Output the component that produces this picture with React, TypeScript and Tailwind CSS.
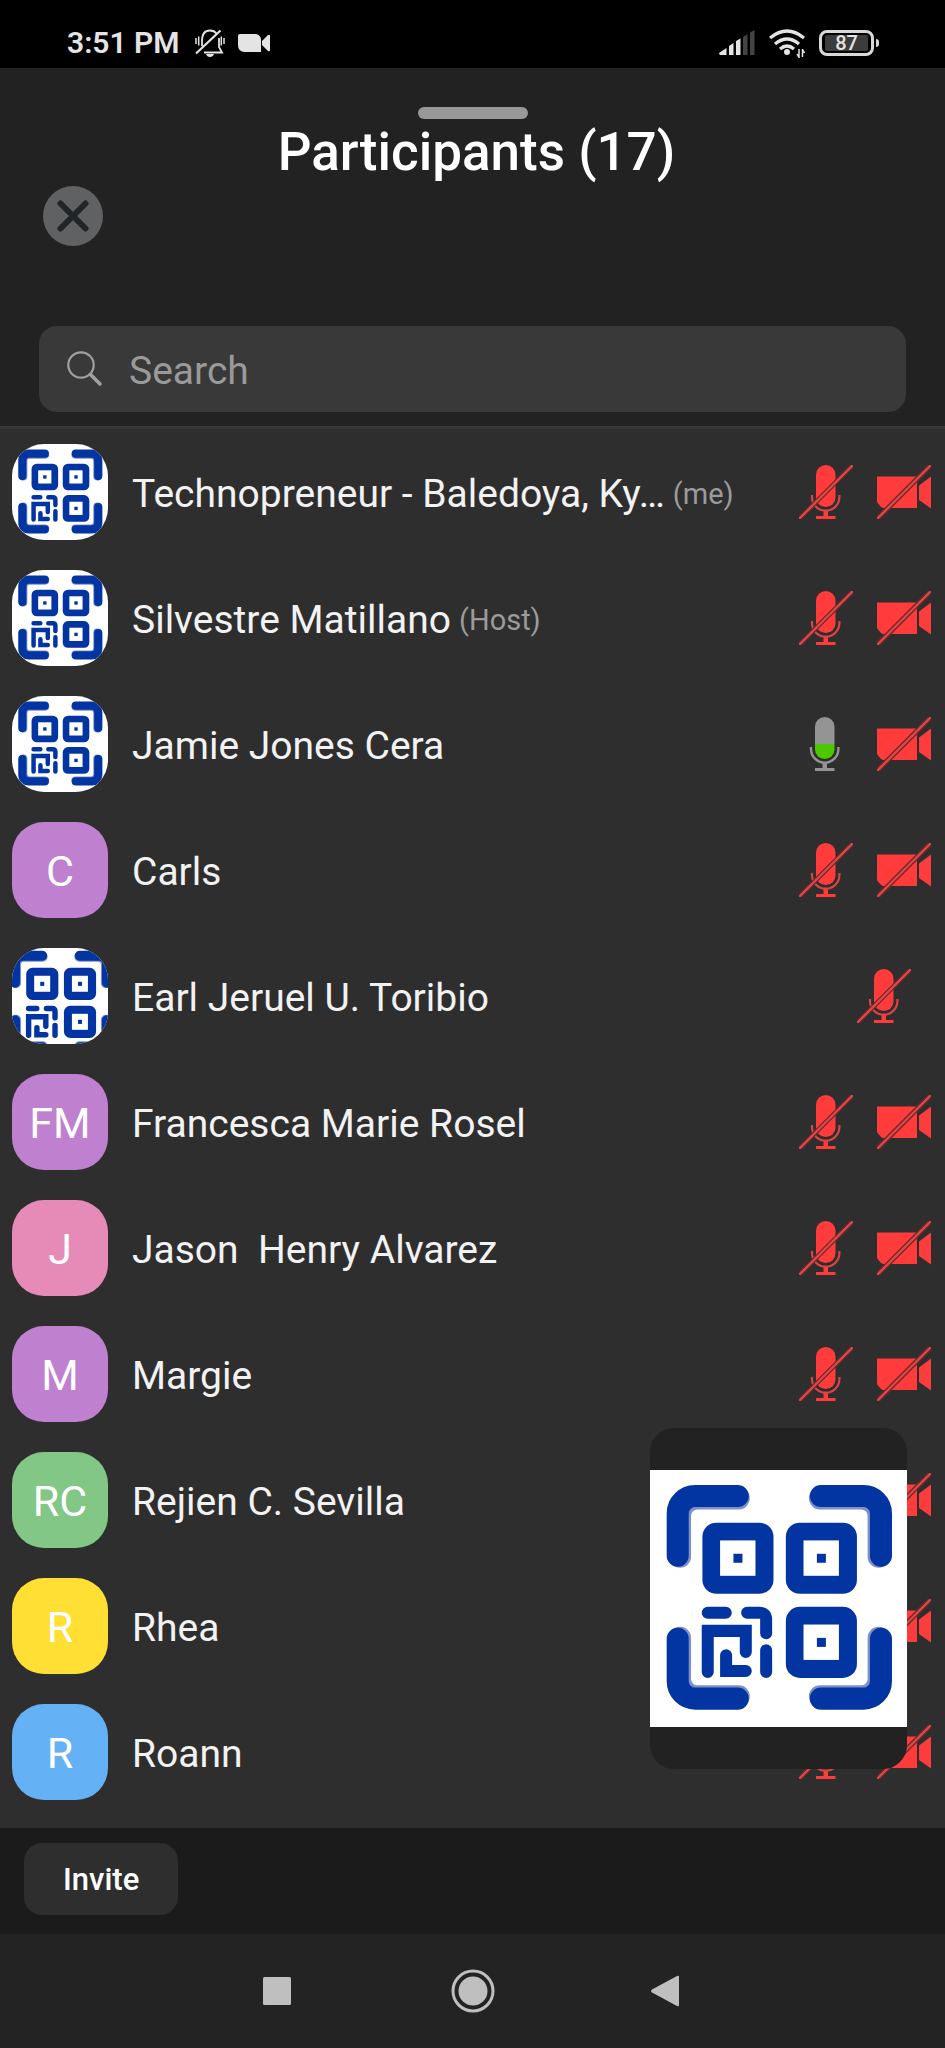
type Camera = "off" | "none";
type Mic = "off" | "live";

interface Participant {
  name: string;
  tag?: string;
  initials?: string;
  color?: string;
  viewBox?: string;
  mic: Mic;
  camera: Camera;
}

const FULL_LOGO = "0 0 770 770";
const CROPPED_LOGO = "63 27 636 636";

const participants: Participant[] = [
  { name: "Technopreneur - Baledoya, Ky…", tag: "(me)", viewBox: FULL_LOGO, mic: "off", camera: "off" },
  { name: "Silvestre Matillano", tag: "(Host)", viewBox: FULL_LOGO, mic: "off", camera: "off" },
  { name: "Jamie Jones Cera", viewBox: FULL_LOGO, mic: "live", camera: "off" },
  { name: "Carls", initials: "C", color: "bg-[#c080d0]", mic: "off", camera: "off" },
  { name: "Earl Jeruel U. Toribio", viewBox: CROPPED_LOGO, mic: "off", camera: "none" },
  { name: "Francesca Marie Rosel", initials: "FM", color: "bg-[#c080d0]", mic: "off", camera: "off" },
  { name: "Jason  Henry Alvarez", initials: "J", color: "bg-[#e68ab8]", mic: "off", camera: "off" },
  { name: "Margie", initials: "M", color: "bg-[#c080d0]", mic: "off", camera: "off" },
  { name: "Rejien C. Sevilla", initials: "RC", color: "bg-[#82c785]", mic: "off", camera: "off" },
  { name: "Rhea", initials: "R", color: "bg-[#ffdf33]", mic: "off", camera: "off" },
  { name: "Roann", initials: "R", color: "bg-[#64b2f5]", mic: "off", camera: "off" },
];

const corners = [
  undefined,
  "translate(775 0) scale(-1 1)",
  "translate(0 763) scale(1 -1)",
  "translate(775 763) scale(-1 -1)",
];

const markers = [
  [157, 158],
  [407, 158],
  [407, 410],
];

function QrLogo({ viewBox, className }: { viewBox: string; className: string }) {
  return (
    <svg viewBox={viewBox} className={className} aria-hidden="true">
      <rect width="770" height="770" fill="#fff" />
      {corners.map((transform, i) => (
        <g key={i} transform={transform} fill="none" strokeLinecap="round" strokeWidth="66">
          <path d="M90 260V137A52 52 0 0 1 142 85H266" stroke="#7d90c9" />
          <path d="M83 257V130A52 52 0 0 1 135 78H263" stroke="#0335a2" />
        </g>
      ))}
      {markers.map(([x, y]) => (
        <g key={`${x}-${y}`} fill="#0335a2">
          <rect x={x} y={y} width="213" height="213" rx="42" />
          <rect x={x + 53} y={y + 53} width="106" height="106" fill="#fff" />
          <rect x={x + 93} y={y + 93} width="27" height="27" />
        </g>
      ))}
      <g fill="none" stroke="#0335a2" strokeWidth="36" strokeLinecap="round">
        <path d="M173 428H227M291 428H328Q348 428 348 448V489M348 540V605" />
        <path d="M173 605V482H287V545M228 555V602H287" />
      </g>
    </svg>
  );
}

function MicOff() {
  return (
    <svg viewBox="0 0 54 54" className="size-[54px]" role="img" aria-label="Microphone off">
      <g fill="#ff3b3b">
        <rect x="17" y="0" width="19.5" height="42" rx="9.75" />
        <path d="M24.5 45H29V51H36.5V54H17V51H24.5Z" />
      </g>
      <path d="M13 30V32A13.7 13.7 0 0 0 40.4 32V30" fill="none" stroke="#d94545" strokeWidth="2.2" />
      <path d="M1 53L53 1" stroke="#6d2727" strokeWidth="4.6" />
      <path d="M1 53L53 1" stroke="#dd4848" strokeWidth="2.4" strokeLinecap="round" />
    </svg>
  );
}

function MicLive() {
  return (
    <svg viewBox="0 0 54 54" className="size-[54px]" role="img" aria-label="Microphone on">
      <path d="M16 27V9.75A9.75 9.75 0 0 1 35.5 9.75V27Z" fill="#949494" />
      <path d="M16 27V32.25A9.75 9.75 0 0 0 35.5 32.25V27Z" fill="#4cc800" />
      <path d="M23.5 45H28V51H35.5V54H16V51H23.5Z" fill="#949494" />
      <path d="M12 30V32A13.7 13.7 0 0 0 39.4 32V30" fill="none" stroke="#949494" strokeWidth="2.4" />
    </svg>
  );
}

function CameraOff() {
  return (
    <svg viewBox="0 0 54 54" className="size-[54px]" role="img" aria-label="Camera off">
      <path d="M0 11.5H40V43H7Q5 43 4 42L1 38.5Q0 37.5 0 36Z" fill="#ff3b3b" />
      <path d="M42 20.5L54 11.5V43.5L42 35Z" fill="#fb3d3d" />
      <path d="M1 53L53 1" stroke="#6d2727" strokeWidth="5" />
      <path d="M1 53L53 1" stroke="#dd4848" strokeWidth="2.4" strokeLinecap="round" />
    </svg>
  );
}

function StatusBar() {
  return (
    <div className="flex h-[68px] items-center justify-between bg-black pr-[66px] pl-[67px] text-[#e4e4e4]">
      <div className="flex items-center pt-[18px]">
        <span className="text-[30px] leading-8 font-semibold">3:51 PM</span>
        <svg viewBox="0 0 30 28" className="ml-[15px] h-7 w-[30px]" fill="none" stroke="currentColor" strokeWidth="1.8" aria-hidden="true">
          <path d="M7 17V12C7 5 10 1.5 15 1.5C18 1.5 20 2.5 21.5 4.5M24 9V18L27 23.5H9" />
          <path d="M1 24.5L25.5 1.5" strokeWidth="2.2" />
          <path d="M1 9V15M3.7 7.5V16.5M26.3 7.5V16.5M29 9V15" strokeWidth="1.5" />
          <path d="M11 25H19Q18 28 15 28T11 25Z" fill="currentColor" stroke="none" />
        </svg>
        <svg viewBox="0 0 32 18" className="ml-[13px] h-[18px] w-8" fill="currentColor" aria-hidden="true">
          <path d="M2 0H18Q23 1 23 6V18H6Q0 17 0 11V2Q0 0 2 0ZM24 7L30 1Q32 0 32 2V16Q32 18 30 17L24 11Z" />
        </svg>
      </div>
      <div className="flex items-center pt-[18px]">
        <svg viewBox="0 0 36 26" className="h-[26px] w-9" fill="currentColor" aria-hidden="true">
          <path d="M0 23L7.5 18V25H1.5Q0 25 0 23ZM10 16L14.5 13V25H10ZM17 11L21.5 8.5V25H17Z" />
          <path d="M24 7L28.5 4V25H24ZM31 2.5L35.5 0V25H31Z" fill="#444" />
        </svg>
        <svg viewBox="0 0 36 29" className="ml-[14px] h-[29px] w-9" fill="none" stroke="currentColor" strokeWidth="3.2" aria-hidden="true">
          <path d="M1 9Q18-5 35 9M6 15Q18 5 30 15M11 20Q18 14 25 20" />
          <circle cx="18" cy="23" r="3" fill="currentColor" stroke="none" />
          <path d="M30 20V29M33.5 20V28M28 25L30 28.5M33.5 20.5L35.5 24" strokeWidth="1.5" />
        </svg>
        <div className="ml-[14px] flex h-[26px] w-[55px] items-center rounded-lg border-3 border-[#d8d8d8] px-[3px]">
          <span className="flex h-4 w-full items-center justify-center rounded-xs bg-[#3c3c3c] text-xl leading-5 font-medium">87</span>
        </div>
        <span className="ml-0.5 h-2 w-[3px] rounded-r bg-[#d8d8d8]" />
      </div>
    </div>
  );
}

function ParticipantRow({ person }: { person: Participant }) {
  return (
    <li className="flex h-[126px] items-center pr-[14px] pl-3">
      {person.viewBox ? (
        <QrLogo viewBox={person.viewBox} className="size-24 shrink-0 rounded-[32px]" />
      ) : (
        <span className={`flex size-24 shrink-0 items-center justify-center rounded-[32px] pt-0.5 text-[43px] leading-none ${person.color}`}>
          {person.initials}
        </span>
      )}
      <span className="flex items-center gap-2 pt-1 pl-6">
        <span className="text-[39px] leading-[46px] whitespace-pre text-[#f2f2f2]">{person.name}</span>
        {person.tag && <span className="text-[29px] leading-9 text-[#9b9b9b]">{person.tag}</span>}
      </span>
      <span className={`ml-auto flex shrink-0 gap-6 ${person.camera === "none" ? "pr-5" : ""}`}>
        {person.mic === "off" ? <MicOff /> : <MicLive />}
        {person.camera === "off" && <CameraOff />}
      </span>
    </li>
  );
}

export default function App() {
  return (
    <div className="flex min-h-screen flex-col bg-[#222] font-[Roboto,sans-serif] text-white">
      <StatusBar />
      <header className="flex flex-col px-[39px] pt-[39px] pb-[14px]">
        <span className="h-3 w-[110px] self-center rounded-full bg-[#989898]" />
        <h1 className="pl-2 text-center text-[53px] leading-[66px] font-medium">Participants (17)</h1>
        <button type="button" aria-label="Close" className="mt-px ml-1 flex size-[60px] items-center justify-center rounded-full bg-[#5f6163]">
          <svg viewBox="0 0 32 32" className="size-8" fill="none" stroke="#212528" strokeWidth="6" strokeLinecap="round" aria-hidden="true">
            <path d="M3.5 3.5L28.5 28.5M28.5 3.5L3.5 28.5" />
          </svg>
        </button>
        <label className="mt-20 flex h-[86px] items-center rounded-[18px] bg-[#393939] pl-7">
          <svg viewBox="0 0 36 36" className="size-9 shrink-0" fill="none" stroke="#a0a0a0" aria-hidden="true">
            <circle cx="14" cy="14" r="12.7" strokeWidth="2.2" />
            <path d="M23.5 23.5L33 33" strokeWidth="3.6" strokeLinecap="round" />
          </svg>
          <input
            type="text"
            aria-label="Search"
            placeholder="Search"
            className="min-w-0 flex-1 bg-transparent pt-1 pl-[26px] text-[39px] leading-[46px] outline-none placeholder:text-[#9a9a9a]"
          />
        </label>
      </header>
      <main className="relative flex-1 border-t-3 border-[#373737] bg-[#2e2e2e] pb-3">
        <ul>
          {participants.map((person) => (
            <ParticipantRow key={person.name} person={person} />
          ))}
        </ul>
        <div className="absolute right-[38px] bottom-[59px] overflow-hidden rounded-3xl bg-[#222] py-[42px]">
          <QrLogo viewBox={FULL_LOGO} className="size-[257px]" />
        </div>
      </main>
      <footer className="bg-[#1b1b1b] px-6 pt-[15px] pb-[19px]">
        <button type="button" className="h-[72px] rounded-[18px] bg-[#2e2e2e] px-[39px] pt-0.5 text-[31px] leading-9 font-medium">
          Invite
        </button>
      </footer>
      <nav className="flex h-[114px] items-center justify-center gap-38 bg-[#232323] text-[#bfbfbf]">
        <button type="button" aria-label="Recent apps">
          <svg viewBox="0 0 44 44" className="size-11" fill="currentColor" aria-hidden="true">
            <rect x="8" y="8" width="28" height="28" rx="1.5" />
          </svg>
        </button>
        <button type="button" aria-label="Home">
          <svg viewBox="0 0 44 44" className="size-11" fill="currentColor" aria-hidden="true">
            <circle cx="22" cy="22" r="20" fill="none" stroke="currentColor" strokeWidth="3" />
            <circle cx="22" cy="22" r="14.5" />
          </svg>
        </button>
        <button type="button" aria-label="Back">
          <svg viewBox="0 0 44 44" className="size-11" fill="currentColor" aria-hidden="true">
            <path d="M5 20.5L30 7Q32 6 32 8V36Q32 38 30 37L5 23.5Q3 22 5 20.5Z" />
          </svg>
        </button>
      </nav>
    </div>
  );
}
